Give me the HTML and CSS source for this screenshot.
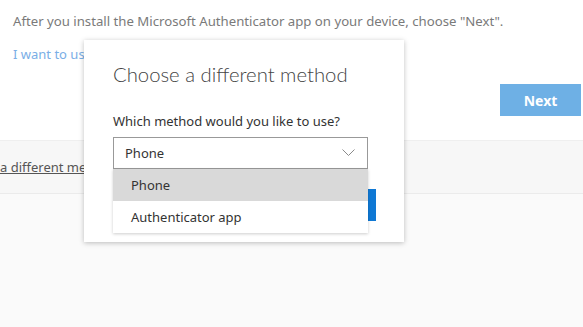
FILE: index.html
```html
<!DOCTYPE html>
<html>
<head>
    <link rel="stylesheet" href="styles.css">
</head>
<body>
    <div class="top">
        <p class="intro">After you install the Microsoft Authenticator app on your device, choose "Next".</p>
        <a class="alt-link" href="#">I want to use a different authenticator app</a>
        <div class="actions">
            <button class="next">Next</button>
        </div>
    </div>

    <div class="band">
        <a class="band-link" href="#">a different method</a>
    </div>

    <div class="modal">
        <h2 class="modal-title">Choose a different method</h2>
        <div class="field-label">Which method would you like to use?</div>
        <div class="select-wrap">
            <div class="select">
                <span>Phone</span>
                <svg class="chevron" width="13" height="8" viewBox="0 0 13 8">
                    <polyline points="0.5,0.5 6.5,6.5 12.5,0.5" fill="none" stroke="#8a8a8a" stroke-width="1"/>
                </svg>
            </div>
            <ul class="options">
                <li class="selected">Phone</li>
                <li>Authenticator app</li>
            </ul>
        </div>
        <div class="modal-actions">
            <button class="confirm">Confirm</button>
        </div>
    </div>
</body>
</html>
```

FILE: styles.css
```css
body {
    margin: 0;
    background: #fafafa;
    font-family: "Noto Sans", "Open Sans", sans-serif;
    font-size: 13px;
    color: #333;
}
.top {
    background: #fff;
    height: 140px;
    box-sizing: border-box;
    padding: 12px 2px 0 13px;
}
.intro {
    margin: 0;
    font-size: 13.2px;
    color: #7a7a7a;
}
.alt-link {
    display: block;
    margin-top: 15px;
    color: #7aaee6;
    text-decoration: none;
}
.actions {
    display: flex;
    justify-content: flex-end;
    margin-top: 21px;
}
.next {
    width: 81px;
    height: 32px;
    border: none;
    background: #6eb0e5;
    color: #fff;
    font-family: inherit;
    font-size: 14px;
    font-weight: bold;
}
.band {
    height: 52px;
    background: #f7f7f7;
    border-top: 1px solid #efefef;
    border-bottom: 1px solid #ebebeb;
    display: flex;
    align-items: center;
}
.band-link {
    color: #555;
    text-decoration: underline;
    font-size: 13px;
}
.modal {
    position: absolute;
    left: 84px;
    top: 40px;
    width: 320px;
    height: 202px;
    box-sizing: border-box;
    padding: 22px 28px 0 29px;
    background: #fff;
    box-shadow: 0 1px 5px rgba(0, 0, 0, 0.25);
}
.modal-title {
    margin: 0;
    font-family: "Lato", "Noto Sans", sans-serif;
    font-size: 20.3px;
    font-weight: 300;
    color: #444;
}
.field-label {
    margin-top: 26px;
}
.select-wrap {
    position: relative;
    width: 255px;
    margin-top: 7px;
}
.select {
    height: 32px;
    box-sizing: border-box;
    border: 1px solid #999;
    display: flex;
    align-items: center;
    justify-content: space-between;
    padding: 0 12px 0 11px;
}
.chevron {
    display: block;
}
.options {
    position: absolute;
    top: 32px;
    left: 0;
    right: 0;
    margin: 0;
    padding: 0;
    list-style: none;
    background: #fff;
    box-shadow: 0 1px 3px rgba(0, 0, 0, 0.2);
    z-index: 2;
}
.options li {
    height: 32px;
    line-height: 32px;
    padding-left: 18px;
}
.options li.selected {
    background: #d9d9d9;
}
.modal-actions {
    display: flex;
    justify-content: flex-end;
    margin-top: 20px;
}
.confirm {
    height: 32px;
    width: 90px;
    border: none;
    background: #0f78d4;
    color: #fff;
    font-family: inherit;
    font-size: 14px;
}
```
